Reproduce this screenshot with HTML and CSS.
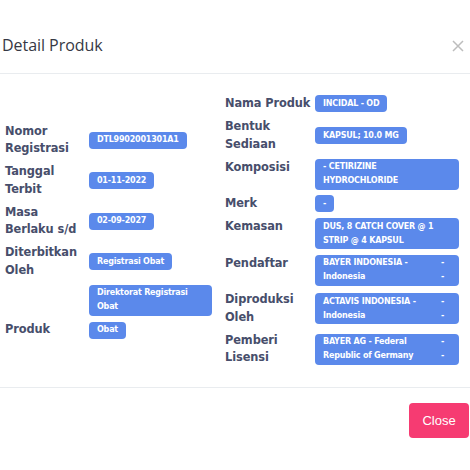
FILE: index.html
```html
<!DOCTYPE html>
<html lang="id">
<head>
<meta charset="utf-8">
<title>Detail Produk</title>
<link rel="stylesheet" href="styles.css">
</head>
<body>
<div class="modal">
  <div class="modal-header">
    <h4 class="modal-title">Detail Produk</h4>
    <button class="btn-x" aria-label="Tutup">
      <svg width="12" height="12" viewBox="0 0 12 12"><path d="M1 1L11 11M11 1L1 11" stroke="#bdbdbd" stroke-width="1.5" fill="none"/></svg>
    </button>
  </div>
  <div class="modal-body">
    <div class="col col-left">
      <div class="lbl">Nomor Registrasi</div><div class="val"><span class="badge">DTL9902001301A1</span></div>
      <div class="lbl">Tanggal Terbit</div><div class="val"><span class="badge">01-11-2022</span></div>
      <div class="lbl">Masa Berlaku s/d</div><div class="val"><span class="badge">02-09-2027</span></div>
      <div class="lbl">Diterbitkan Oleh</div><div class="val"><span class="badge">Registrasi Obat</span></div>
      <div class="lbl"></div><div class="val"><span class="badge">Direktorat Registrasi Obat</span></div>
      <div class="lbl">Produk</div><div class="val"><span class="badge">Obat</span></div>
    </div>
    <div class="col col-right">
      <div class="lbl">Nama Produk</div><div class="val"><span class="badge">INCIDAL - OD</span></div>
      <div class="lbl">Bentuk Sediaan</div><div class="val"><span class="badge">KAPSUL; 10.0 MG</span></div>
      <div class="lbl">Komposisi</div><div class="val"><span class="badge">- CETIRIZINE HYDROCHLORIDE</span></div>
      <div class="lbl">Merk</div><div class="val"><span class="badge">-</span></div>
      <div class="lbl">Kemasan</div><div class="val"><span class="badge">DUS, 8 CATCH COVER @ 1 STRIP @ 4 KAPSUL</span></div>
      <div class="lbl">Pendaftar</div><div class="val"><span class="badge badge-split"><span class="main">BAYER INDONESIA - Indonesia</span><span class="dash">-<br>-</span></span></div>
      <div class="lbl">Diproduksi Oleh</div><div class="val"><span class="badge badge-split"><span class="main">ACTAVIS INDONESIA - Indonesia</span><span class="dash">-<br>-</span></span></div>
      <div class="lbl">Pemberi Lisensi</div><div class="val"><span class="badge badge-split"><span class="main">BAYER AG - Federal Republic of Germany</span><span class="dash">-<br>-</span></span></div>
    </div>
  </div>
  <div class="modal-footer">
    <button class="btn-close">Close</button>
  </div>
</div>
</body>
</html>
```
FILE: styles.css
```css
html, body {
  margin: 0;
  padding: 0;
  background: #ffffff;
}
.modal {
  width: 470px;
  font-family: "DejaVu Sans", "Open Sans", sans-serif;
}
.modal-header {
  display: flex;
  align-items: center;
  justify-content: space-between;
  padding: 16px 6px 0 2px;
  height: 74px;
  box-sizing: border-box;
  border-bottom: 1px solid #e9ecef;
}
.modal-title {
  margin: 0;
  font-family: "Open Sans", sans-serif;
  font-weight: 400;
  font-size: 16px;
  line-height: 28px;
  color: #363844;
  letter-spacing: -0.05px;
}
.btn-x {
  border: 0;
  background: none;
  padding: 0;
  margin-top: 2px;
  width: 12px;
  height: 12px;
  display: flex;
  align-items: center;
  justify-content: center;
}
.modal-body {
  display: flex;
  align-items: center;
  padding: 21px 0 20px 5px;
  border-bottom: 1px solid #e9ecef;
}
.col {
  display: grid;
  row-gap: 5.5px;
}
.col-left {
  grid-template-columns: 84px 123px;
  margin-right: 13px;
}
.col-right {
  grid-template-columns: 90px 144px;
}
.lbl {
  align-self: start;
  font-weight: 700;
  font-size: 11.4px;
  line-height: 17.5px;
  color: #474e6b;
  letter-spacing: -0.1px;
  padding-right: 3px;
}
.val {
  align-self: center;
  display: flex;
  align-items: flex-start;
}
.badge {
  display: inline-block;
  box-sizing: border-box;
  max-width: 100%;
  background: #5b89eb;
  color: #ffffff;
  font-weight: 700;
  font-size: 8px;
  line-height: 14px;
  padding: 1.5px 8px;
  border-radius: 4px;
  letter-spacing: -0.2px;
}
.badge-split {
  display: flex;
  width: 100%;
  justify-content: space-between;
}
.badge-split .main {
  flex: 1;
}
.badge-split .dash {
  width: 16px;
  text-align: right;
  padding-right: 7px;
}
.modal-footer {
  display: flex;
  justify-content: flex-end;
  padding: 15px 1px 0 0;
}
.btn-close {
  border: 0;
  background: #f63b72;
  color: #ffffff;
  font-family: "Liberation Sans", Arial, sans-serif;
  font-size: 13px;
  width: 60px;
  height: 35px;
  border-radius: 4px;
  padding: 0;
}
```
